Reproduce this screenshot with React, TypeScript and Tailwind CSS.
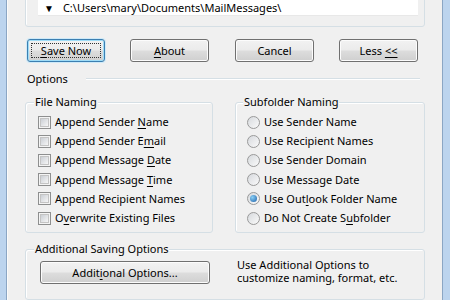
import React from "react";

const U = ({ children }: { children: React.ReactNode }) => <span className="underline underline-offset-[2px] decoration-[1px]">{children}</span>;

function Btn({ children, className = "", focused = false }: { children: React.ReactNode; className?: string; focused?: boolean }) {
  return (
    <div
      className={`flex items-center justify-center rounded-[3px] border ${focused ? "border-[#3c7fb1] shadow-[inset_0_0_0_1px_#9fdcf7,0_0_0_1px_#cfeaf8]" : "border-[#707070] shadow-[inset_0_0_0_1px_#fcfcfc]"} bg-[linear-gradient(#f2f2f2_0%,#ebebeb_48%,#dddddd_52%,#cfcfcf_100%)] ${className}`}
    >
      {focused ? (
        <div className="flex items-center justify-center w-[calc(100%-6px)] h-[calc(100%-6px)] border border-dotted border-[#333]">
          <span>{children}</span>
        </div>
      ) : (
        <span>{children}</span>
      )}
    </div>
  );
}

function Check({ children }: { children: React.ReactNode }) {
  return (
    <div className="flex items-center h-[19.2px]">
      <div className="w-[13px] h-[13px] border border-[#8e8f8f] bg-[#f4f4f4] flex items-center justify-center">
        <div className="w-[9px] h-[9px] border border-[#c4c4c4] bg-[linear-gradient(135deg,#cbcfd5,#f6f6f6)]" />
      </div>
      <span className="ml-[4px]">{children}</span>
    </div>
  );
}

function Radio({ children, checked = false }: { children: React.ReactNode; checked?: boolean }) {
  return (
    <div className="flex items-center h-[19.2px]">
      <div className="w-[13px] h-[13px] rounded-full border border-[#999] bg-[linear-gradient(135deg,#d6d9dd,#fafafa)] flex items-center justify-center">
        {checked && <div className="w-[7px] h-[7px] rounded-full bg-[radial-gradient(circle_at_35%_35%,#8ad0f5,#1d5fa8)]" />}
      </div>
      <span className="ml-[4px]">{children}</span>
    </div>
  );
}

export default function App() {
  return (
    <div className="w-[450px] h-[300px] flex overflow-hidden text-[11px] text-black leading-[14px]" style={{ fontFamily: '"Noto Sans", sans-serif' }}>
      <div className="w-[6px] bg-[#bcd4ee]" />
      <div className="w-px bg-[#8ba6c4]" />
      <div className="w-px bg-[#fbfbfb]" />
      <div className="flex-1 bg-[#f0f0f0] flex flex-col">
        {/* path group */}
        <div className="ml-[17px] w-[400px] h-[38px] mt-[-11px] border border-[#d5dfe5] rounded-[3px] shadow-[inset_1px_1px_0_#fff] pl-[12px] pr-[6px] pb-[10px] flex flex-col justify-end">
          <div className="bg-white h-[26px] flex items-start pt-[11px] pl-[6px] border-b border-[#e8e8e8]">
            <span className="text-[10px] leading-[14px] mr-[9px]">▼</span>
            <span>C:\Users\mary\Documents\MailMessages\</span>
          </div>
        </div>
        {/* buttons */}
        <div className="flex mt-[12px] ml-[19px] h-[23px] items-center">
          <Btn focused className="w-[78px] h-[23px]"><U>S</U>ave Now</Btn>
          <Btn className="w-[79px] h-[23px] ml-[25px]"><U>A</U>bout</Btn>
          <Btn className="w-[79px] h-[23px] ml-[26px]">Cancel</Btn>
          <Btn className="w-[79px] h-[23px] ml-[25px]">Less <U>&lt;&lt;</U></Btn>
        </div>
        {/* options */}
        <div className="flex items-center mt-[10px] ml-[19px] h-[15px]">
          <span>Options</span>
          <div className="ml-[18px] w-[334px] h-[2px] border-t border-[#d5dfe5] border-b border-b-white" />
        </div>
        {/* groups */}
        <div className="flex mt-[16px] ml-[17px]">
          <div className="relative w-[188px] h-[131px] border border-[#d5dfe5] rounded-[3px] shadow-[inset_1px_1px_0_#fff] pt-[9.5px] pl-[12px]">
            <span className="absolute left-[8px] top-[-8px] bg-[#f0f0f0] px-[1px]">File Naming</span>
            <Check>Append Sender <U>N</U>ame</Check>
            <Check>Append Sender E<U>m</U>ail</Check>
            <Check>Append Message <U>D</U>ate</Check>
            <Check>Append Message <U>T</U>ime</Check>
            <Check>Append Recipient Names</Check>
            <Check>O<U>v</U>erwrite Existing Files</Check>
          </div>
          <div className="relative ml-[22px] w-[190px] h-[131px] border border-[#d5dfe5] rounded-[3px] shadow-[inset_1px_1px_0_#fff] pt-[9.5px] pl-[11px]">
            <span className="absolute left-[7px] top-[-8px] bg-[#f0f0f0] px-[1px]">Subfolder Naming</span>
            <Radio>Use Sender Name</Radio>
            <Radio>Use Recipient Names</Radio>
            <Radio>Use Sender Domain</Radio>
            <Radio>Use Message Date</Radio>
            <Radio checked>Use Out<U>l</U>ook Folder Name</Radio>
            <Radio>Do Not Create S<U>u</U>bfolder</Radio>
          </div>
        </div>
        {/* additional */}
        <div className="relative ml-[17px] mt-[16px] w-[400px] h-[60px] border border-[#d5dfe5] rounded-[3px] shadow-[inset_1px_1px_0_#fff] flex pt-[11px] pl-[14px]">
          <span className="absolute left-[8px] top-[-8px] bg-[#f0f0f0] px-[1px]">Additional Saving Options</span>
          <Btn className="w-[170px] h-[23px]">Addit<U>i</U>onal Options...</Btn>
          <div className="ml-[27px] mt-[-3px] flex flex-col">
            <span className="h-[13px] leading-[13px]">Use Additional Options to</span>
            <span className="h-[13px] leading-[13px]">customize naming, format, etc.</span>
          </div>
        </div>
      </div>
      <div className="w-px bg-[#8ba6c4]" />
      <div className="w-[7px] bg-[#bcd4ee]" />
    </div>
  );
}
